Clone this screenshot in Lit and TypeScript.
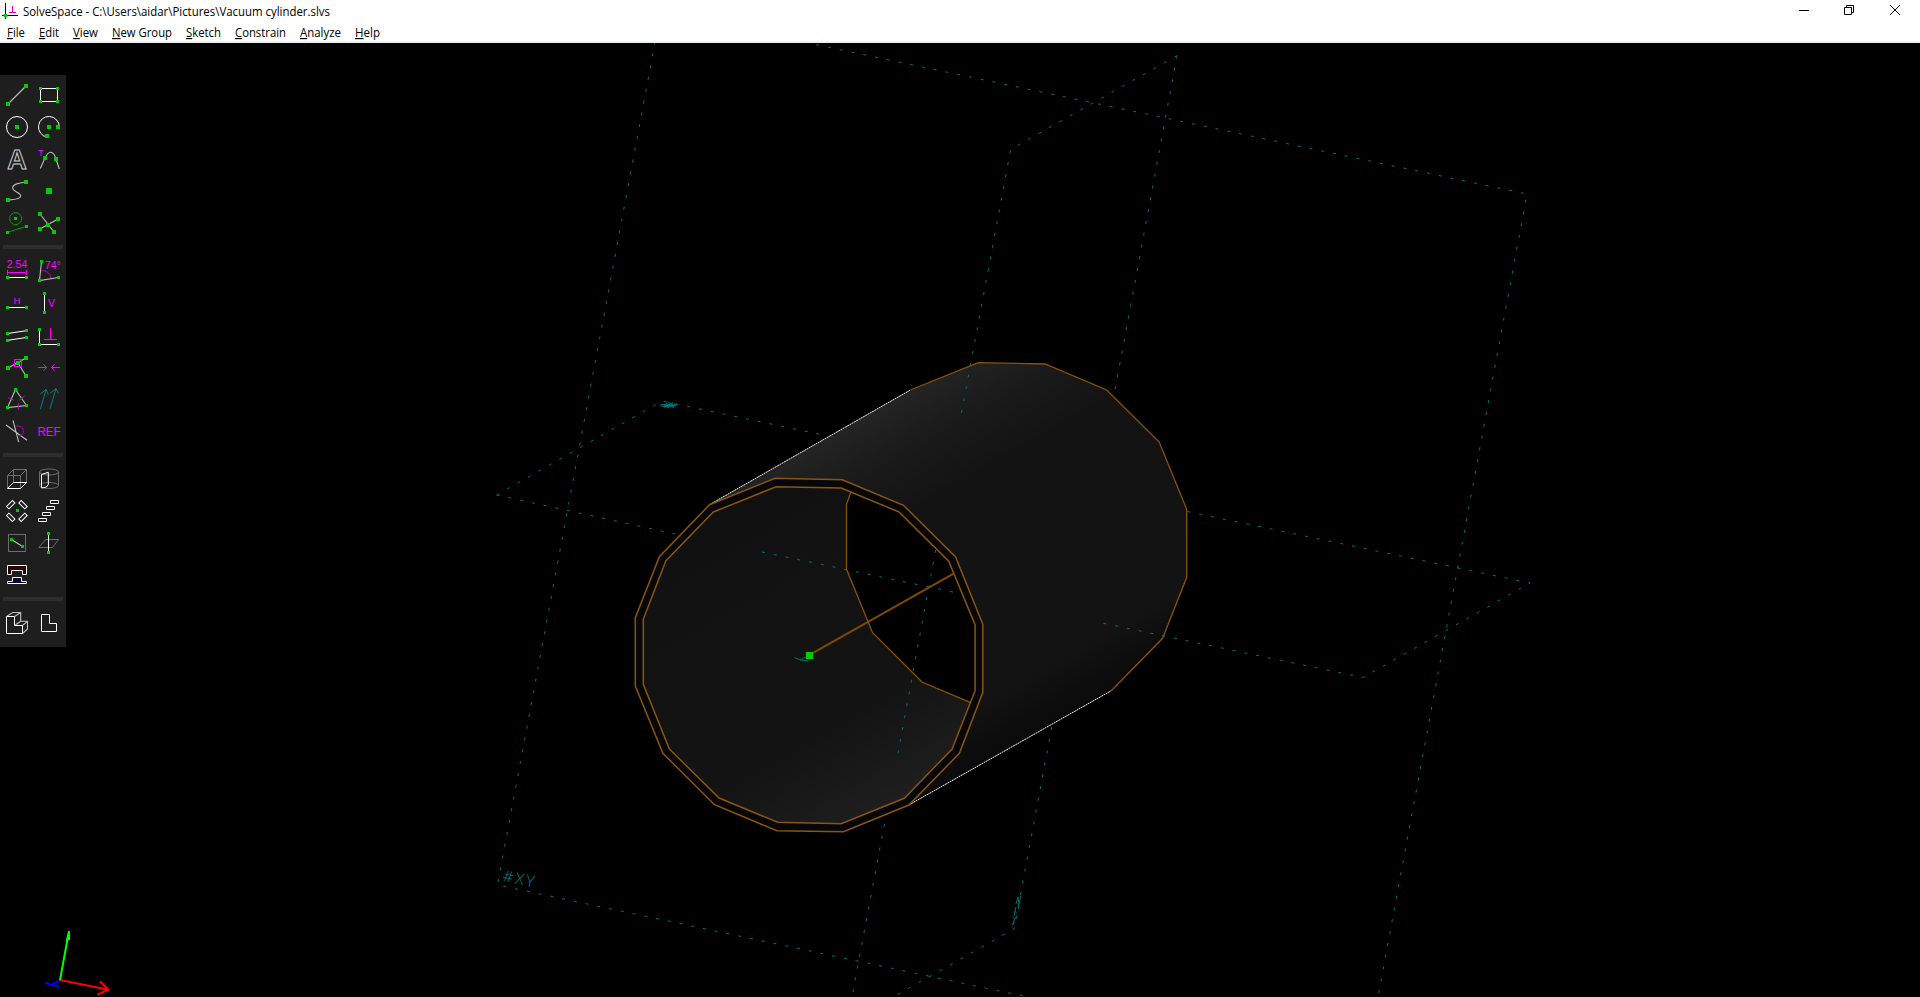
import { LitElement, html, svg, css, type SVGTemplateResult } from "lit";
import { customElement } from "lit/decorators.js";

const dot = (x: number, y: number, s = 4) =>
  svg`<rect class="dot" x=${x - s / 2} y=${y - s / 2} width=${s} height=${s}></rect>`;

const chip = (x: number, y: number, a: number) =>
  svg`<rect class="w" x="-4.2" y="-1.7" width="8.4" height="3.4" transform="translate(${x} ${y}) rotate(${a})"></rect>`;

const GROUPS: SVGTemplateResult[][] = [
  [
    svg`<path class="g" d="M7 25L25 7"></path>${dot(25, 7)}${dot(7, 25)}`,
    svg`<rect class="w" x="7.5" y="9.5" width="17" height="13"></rect>${dot(7.5, 9.5, 3)}${dot(24.5, 9.5, 3)}${dot(7.5, 22.5, 3)}${dot(24.5, 22.5, 3)}`,
    svg`<circle class="w" cx="16" cy="16" r="10.5"></circle>${dot(16, 16)}`,
    svg`<path class="w" d="M26.3 16A10.4 10.4 0 1 0 14 26.1"></path>${dot(16, 16)}${dot(25, 16)}${dot(14, 25)}`,
    svg`<text class="big" x="16" y="26" textLength="19.5" lengthAdjust="spacingAndGlyphs">A</text>`,
    svg`<path class="g" d="M7.3 25.5L12 15C14 11 15 9.3 17.5 9.3S21.5 11 23 16L26.3 26"></path>${dot(12, 15)}${dot(23, 16)}<text class="mt" x="7.8" y="13" font-size="8.5">T</text>`,
    svg`<path class="g" d="M25 7C18 8 11.5 9 11.7 13C12 17 20 17.5 19.7 21C19.4 24.6 12 24.6 7 25"></path>${dot(25, 7)}${dot(7, 25)}`,
    svg`${dot(16, 16, 6)}`,
    svg`<circle class="gr" cx="14.6" cy="11.6" r="6"></circle><path class="gr" d="M6.5 25.3L25.5 19.3"></path>${dot(14.5, 11.5, 3)}${dot(6.5, 25.5, 3)}${dot(25.5, 19.5, 3)}`,
    svg`<path class="g" d="M7 7L21 25M7 22L25 12"></path>${dot(7, 7)}${dot(25, 12)}${dot(15, 18)}${dot(7, 22)}${dot(21, 25)}`,
  ],
  [
    svg`<text class="mt" x="16" y="13" font-size="10" textLength="20.5" lengthAdjust="spacingAndGlyphs">2.54</text><path class="m" d="M6.5 17.5H25.5M6.5 15V20M25.5 15V20"></path><path class="w" d="M6.5 22.5H25.5"></path>${dot(6.5, 22.5, 3)}${dot(25.5, 22.5, 3)}`,
    svg`<path class="g" d="M8.5 6.5L6.5 25.5L25.5 22.5"></path><path class="md" d="M8.3 15.6Q16.5 15.5 18 23"></path><text class="mt" x="19.8" y="13.7" font-size="10" textLength="16" lengthAdjust="spacingAndGlyphs">74°</text>${dot(8.5, 6.5, 3)}${dot(6.5, 25.5, 3)}${dot(25.5, 22.5, 3)}`,
    svg`<text class="mt" x="16" y="17" font-size="9.5">H</text><path class="w" d="M6.5 20.5H25.5"></path>${dot(6.5, 20.5, 3)}${dot(25.5, 20.5, 3)}`,
    svg`<path class="w" d="M11.5 6.5V25.5"></path><text class="mt" x="18.6" y="20" font-size="10.5">V</text>${dot(11.5, 6.5, 3)}${dot(11.5, 25.5, 3)}`,
    svg`<path class="w" d="M6.5 14.5L25.5 11.7M6.5 21.3L25.5 18.5"></path>${dot(6.5, 14.5, 3)}${dot(25.5, 11.5, 3)}${dot(6.5, 21.5, 3)}${dot(25.5, 18.5, 3)}`,
    svg`<path class="w" d="M6.5 10.5V25.5H25.5"></path><path class="m" d="M17.5 9V20.5M11 20.5H24"></path>${dot(6.5, 10.5, 3)}${dot(6.5, 25.5, 3)}${dot(25.5, 25.5, 3)}`,
    svg`<path class="g" d="M7 17L25 7M17 12L25 25"></path><rect class="m" x="13.5" y="8.5" width="7" height="7"></rect>${dot(7, 17)}${dot(17, 12)}${dot(25, 7)}${dot(25, 25)}`,
    svg`<path class="m" d="M5 16.5H13.5M10.5 13.2L13.5 16.5L10.5 19.8M27 16.5H18.5M21.5 13.2L18.5 16.5L21.5 19.8"></path>`,
    svg`<path class="g" d="M14.5 6.5L6.5 24.5L25.5 22.5Z"></path><path class="md" d="M7 14.5L13 17.3M18.3 17.3L23.7 12.7M17.3 20V27"></path>${dot(14.5, 6.5, 3)}${dot(6.5, 24.5, 3)}${dot(25.5, 22.5, 3)}`,
    svg`<path class="t" d="M7.3 26.3L13 6.5M7.3 11L13 6.5L15.3 11.3M17 25.7L23 5.7M17 10.3L23 5.7L25.3 10.5"></path>`,
    svg`<path class="g" d="M5 10L26 25.3M12 5.3L17.7 27"></path><path class="md" d="M14 11.5C19 9.5 23 13 22.3 17C21.8 20 18.5 21.5 16 20.5"></path>`,
    svg`<text class="mt" x="16" y="20.5" font-size="12" textLength="23" lengthAdjust="spacingAndGlyphs">REF</text>`,
  ],
  [
    svg`<path class="d" d="M6.5 25.5V12.5H19.5V25.5M6.5 12.5L12.5 6.5H25.5V19.5M19.5 12.5L25.5 6.5M12.5 6.5V19.5"></path><path class="w" d="M6.5 25.5H19.5L25.5 19.5H12.5Z"></path>`,
    svg`<path class="d" d="M6.5 9V22.5M25.5 9V22.5"></path><ellipse class="d" cx="16" cy="9" rx="9.5" ry="3"></ellipse><ellipse class="d" cx="16" cy="22.5" rx="9.5" ry="3"></ellipse><path class="w" d="M8.5 11.5L15.3 9.3V21.5L13.5 24L8.5 25Z"></path>`,
    svg`${chip(9.7, 9.7, -45)}${chip(22, 9.7, 45)}${chip(9.7, 22.3, 45)}${chip(22, 22.3, -45)}${dot(16.5, 15.5, 3)}`,
    svg`<path class="w" d="M17.5 5.5h8v3h-8zM13.5 11.5h8v3h-8zM9.5 17.5h8v3h-8zM5.5 23.5h8v3h-8z"></path>`,
    svg`<rect class="d" x="7.5" y="7.5" width="17" height="17"></rect><path class="g" d="M10.5 12.5L21.5 19.5"></path>${dot(10.5, 12.5, 3)}${dot(21.5, 19.5, 3)}`,
    svg`<path class="d" d="M5.7 20.5H19.3L25.7 12.5H12.7Z"></path><path class="w" d="M15.5 6.5V25.5"></path>${dot(15.5, 6.5, 3)}${dot(15.5, 25.5, 3)}`,
    svg`<path class="w maroon" d="M6.5 6.5H25.5V15.5H21.5V11.5H10.5V15.5H6.5Z"></path><path class="w navy" d="M6.5 24.5V22.5H11.5V18.5H20.5V22.5H25.5V24.5Z"></path>`,
    svg``,
  ],
  [
    svg`<path class="g" d="M5.5 9.5L11.7 5.5H19.7V14.3H26.5V22L21.5 26.5M13.5 9.5L19.7 5.5M13.5 18.5L19.7 14.3M21.5 18.5L26.5 14.3"></path><path class="w" d="M5.5 9.5H13.5V18.5H21.5V26.5H5.5Z"></path>`,
    svg`<path class="w" d="M8.5 7.5H16.5V16.5H23.5V24.5H8.5Z"></path>`,
  ],
];

const MENUS: [string, string, number][] = [
  ["F", "ile", 18], ["E", "dit", 20], ["V", "iew", 25], ["N", "ew Group", 60],
  ["S", "ketch", 35], ["C", "onstrain", 51], ["A", "nalyze", 41], ["H", "elp", 25],
];

/* Toolbar button glyphs, each on a 32px square */
@customElement("tool-bar")
export class ToolBar extends LitElement {
  static styles = css`
    :host { display: flex; flex-direction: column; width: 66px; height: 572px; box-sizing: border-box; padding-top: 4px; background: #1e1e1e; }
    .group { display: grid; grid-template-columns: 32px 32px; grid-auto-rows: 32px; padding-left: 1px; }
    .sep { height: 4px; margin: 6px 3px; background: #2d2d2d; }
    svg { display: block; width: 32px; height: 32px; fill: none; stroke-width: 1; }
    .w { stroke: #fff; }
    .g { stroke: #bdbdbd; stroke-width: 1.1; }
    .d { stroke: #6c6c6c; }
    .gr { stroke: #00a000; }
    .m { stroke: #f0f; }
    .md { stroke: #c000c0; }
    .t { stroke: #008080; }
    .dot { fill: #00cc00; shape-rendering: crispEdges; }
    .maroon { fill: #330000; }
    .navy { fill: #000033; }
    .mt { fill: #f0f; font-family: "Liberation Sans", sans-serif; text-anchor: middle; }
    .big { fill: none; stroke: #d0d0d0; font: bold 28px "Liberation Sans", sans-serif; text-anchor: middle; }
  `;
  render() {
    return GROUPS.map((g, i) => html`
      ${i ? html`<div class="sep"></div>` : ""}
      <div class="group">${g.map((icon) => html`<svg viewBox="0 0 32 32">${icon}</svg>`)}</div>`);
  }
}

const OUTER = "635.3,617.7 635.3,686 662.9,753.3 714.5,804.7 776.9,830.7 843.5,831.7 908.9,805 959.4,753.3 982.8,692.3 982.8,624.3 955.6,557 903.5,505.3 842.3,479.7 775,478.3 709.5,504.7 659.4,556.7";
const INNER = "643.3,619.3 643.3,684.3 669.4,749 719.1,798 777.7,822.3 841.2,823.7 904.3,798.3 952.1,749 975.1,690.7 975.1,625 948.7,561.3 899,512 841.2,488 776.1,486.7 713.4,512 665.9,560.7";
const BACK = "910.4,390 978.2,362.7 1045.1,364 1106.7,390 1159.2,442 1186.7,509.3 1186.7,577.3 1162.6,638.3 1111.3,690.7";
const HOLE = "851.1,491.7 846.5,504.3 846.5,569.3 872.6,632.7 922.3,682.3 970.1,702.3";

/* The model view: reference planes, the shaded tube and the axis triad */
@customElement("model-view")
export class ModelView extends LitElement {
  static styles = css`
    :host { display: block; overflow: hidden; background: #000; }
    svg { display: block; }
    .plane { fill: none; stroke: #007474; stroke-width: 1; stroke-dasharray: 3 9; }
    .label { fill: none; stroke: #007070; stroke-width: 1; }
    .name { fill: #008484; font: 300 16px "Open Sans", sans-serif; }
    .edge { fill: none; stroke: #8a5510; stroke-width: 1.5; }
    .back { fill: none; stroke: #8a5208; stroke-width: 1.3; }
    .sil { stroke: #f4f4f4; stroke-width: 1; stroke-dasharray: 2 0.6; }
    .axis { stroke: #7f4a00; stroke-width: 2; }
    .red { stroke: #f00; } .green { stroke: #0f0; } .blue { stroke: #00f; }
    .triad { fill: none; stroke-width: 2; }
  `;
  render() {
    return html`<svg width="1920" height="954" viewBox="0 43 1920 954">
      <defs>
        <linearGradient id="body" gradientUnits="userSpaceOnUse" x1="709.5" y1="504.7" x2="887.9" y2="816.8">
          <stop offset="0" stop-color="#242424"></stop><stop offset=".12" stop-color="#1b1b1b"></stop>
          <stop offset=".3" stop-color="#131313"></stop><stop offset=".62" stop-color="#131313"></stop>
          <stop offset=".86" stop-color="#131313"></stop><stop offset=".96" stop-color="#0c0c0c"></stop>
          <stop offset="1" stop-color="#0b0b0b"></stop>
        </linearGradient>
        <linearGradient id="bore" gradientUnits="userSpaceOnUse" x1="709.5" y1="504.7" x2="887.9" y2="816.8">
          <stop offset="0" stop-color="#101010"></stop><stop offset=".2" stop-color="#121212"></stop>
          <stop offset=".7" stop-color="#131313"></stop><stop offset="1" stop-color="#1f1f1f"></stop>
        </linearGradient>
      </defs>
      <polygon fill="url(#body)" points="709.5,504.7 ${BACK} 908.9,805 843.5,831.7 776.9,700"></polygon>
      <polygon fill="#070707" points=${OUTER}></polygon>
      <polygon fill="url(#bore)" points=${INNER}></polygon>
      <polygon fill="#000" points="${HOLE} 975.1,690.7 975.1,625 948.7,561.3 899,512"></polygon>
      <path class="plane" d="M498 882L660.7 12L1527 194L1378 997"></path>
      <path class="plane" stroke-dashoffset="-6" d="M497.5 885L1028 997"></path>
      <path class="plane" d="M1177 55.7L1010.7 149.3L961.5 413M935.6 550L897.5 756M884.4 824L852 997"></path>
      <path class="plane" d="M1177 55.7L1115 390M1051.8 727L1014 929L895 996"></path>
      <path class="plane" d="M496.7 495L662 401L826.6 435.7M1187.5 511.5L1530 583L1363 677.5L1102 623"></path>
      <path class="plane" d="M496.7 495L680 535M762 552L953 592"></path>
      <polyline class="back" points=${BACK}></polyline>
      <polyline class="back" points=${HOLE}></polyline>
      <path class="sil" d="M709.5 504.7L910.4 390M908.9 805L1111.3 690.7"></path>
      <polygon class="edge" points=${OUTER}></polygon>
      <polygon class="edge" points=${INNER}></polygon>
      <path class="axis" d="M810 654.7L954 573.3"></path>
      <path class="label" stroke-width="1.5" d="M794.5 657.5L800 660L808.5 661M800 660L809 655.5"></path>
      <rect x="806" y="652" width="7" height="7" fill="#00cc00"></rect>
      <text class="name" transform="matrix(.98 .2 -.18 .98 502 881)" textLength="32">#XY</text>
      <path class="label" d="M661 404.5H677M663 406.5H674M666 403L674 408M664 407.5L673 402.5M668 402L676 406.5M660 405.5L669 407.5M664 405.5H676"></path>
      <path class="label" d="M1016 904L1018 897L1019 904L1020.5 896M1018.5 905V909M1016 907L1015 911L1016.5 913M1015 911L1014 916M1013 918H1017M1014.5 919L1012.5 925L1014.5 922"></path>
      <g class="triad">
        <path class="blue" d="M60 980L51 985L45.5 982.5M51 985L59.5 986"></path>
        <path class="red" d="M60 980L108.5 989.7M100 981.5L108.5 989.7L97.3 994.7"></path>
        <path class="green" d="M60 980L69 931.3M66.5 942L69 931.3V940"></path>
      </g>
    </svg>`;
  }
}

@customElement("app-root")
export class AppRoot extends LitElement {
  static styles = css`
    :host { display: flex; flex-direction: column; width: 1920px; height: 997px; overflow: hidden; background: #000; font: 11.7px/16px "Open Sans", sans-serif; color: #000; }
    header { height: 41px; border-bottom: 2px solid #f0f0f0; background: #fff; }
    .title { display: flex; align-items: center; height: 24px; padding-left: 2px; }
    .app { width: 16px; height: 18px; margin-right: 5px; fill: none; }
    .name { flex: 1; }
    .buttons { display: flex; gap: 36px; margin-right: 20px; width: 101px; flex: none; }
    .buttons svg { flex: none; width: 10px; height: 10px; margin-bottom: 4px; fill: none; stroke: #000; overflow: visible; }
    .buttons svg:first-child { margin-right: -1px; }
    nav { display: flex; gap: 14px; padding-left: 7px; height: 18px; align-items: center; }
    .fit { display: block; height: 16px; overflow: visible; }
    .fit text { fill: #000; }
    .u { text-decoration: underline; text-underline-offset: 2px; }
    main { display: grid; flex: 1; min-height: 0; }
    main > * { grid-area: 1 / 1; }
    tool-bar { margin-top: 32px; z-index: 1; }
  `;
  render() {
    return html`<header>
        <div class="title">
          <svg class="app" viewBox="0 0 16 18"><path stroke="#000" d="M3.5 0V16M0 12.5H16"></path><path stroke="#d000d0" d="M10.5 3V9.5M7 9.5H14"></path><circle cx="3.5" cy="12.5" r="2" fill="#00cc00"></circle></svg>
          <div class="name"><svg class="fit" width="308"><text y="12" textLength="307" lengthAdjust="spacingAndGlyphs">SolveSpace - C:\\Users\\aidar\\Pictures\\Vacuum cylinder.slvs</text></svg></div>
          <div class="buttons">
            <svg><path d="M0 5.5H10"></path></svg>
            <svg><path d="M.5 2.5H7.5V9.5H.5ZM2.5 2.5V.5H9.5V7.5H7.5"></path></svg>
            <svg><path d="M0 0L10 10M10 0L0 10"></path></svg>
          </div>
        </div>
        <nav>${MENUS.map(([k, rest, w]) => html`<svg class="fit" width=${w}><text y="12" textLength=${w} lengthAdjust="spacingAndGlyphs"><tspan class="u">${k}</tspan>${rest}</text></svg>`)}</nav>
      </header>
      <main><model-view></model-view><tool-bar></tool-bar></main>`;
  }
}
